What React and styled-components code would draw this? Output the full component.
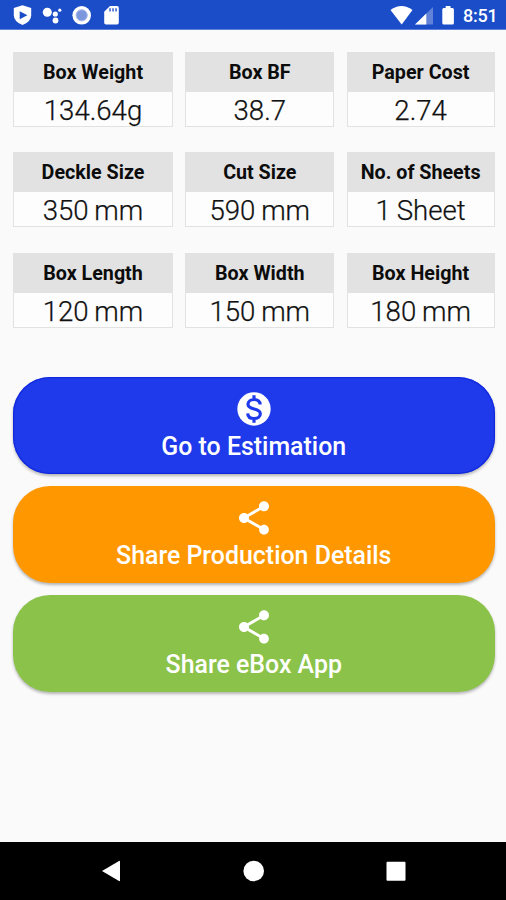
import React from "react";
import styled, { createGlobalStyle } from "styled-components";

const GlobalStyle = createGlobalStyle`
  * { box-sizing: border-box; }
  body { margin: 0; background: #fafafa; font-family: Roboto, sans-serif; }
`;

const Screen = styled.div`
  display: flex;
  flex-direction: column;
  width: 506px;
  height: 900px;
  overflow: hidden;
  background: #fafafa;
`;

const StatusBar = styled.header`
  flex: none;
  display: flex;
  justify-content: space-between;
  height: 30px;
  padding: 0 9px 0 12px;
  background: #1c4dc8;
  border-bottom: 1px solid #5f80d8;
  color: #fff;
`;

const StatusGroup = styled.div`
  display: flex;
  align-items: center;
`;

const StatusIcons = styled.svg`
  display: block;
  height: 30px;
  width: ${(p) => p.$width}px;
`;

const Clock = styled.span`
  width: 34px;
  margin-top: 3px;
  font-size: 18px;
  line-height: 22px;
  font-weight: 500;
  letter-spacing: -0.2px;
  white-space: nowrap;
`;

const Content = styled.main`
  flex: 1;
  padding: 22px 11.5px 0 13px;
`;

const Metrics = styled.section`
  display: grid;
  grid-template-columns: 160px 149px 148px;
  grid-auto-rows: 75px;
  column-gap: 12.3px;
  row-gap: 25.3px;
`;

const Metric = styled.article`
  display: flex;
  flex-direction: column;
  border: 1px solid #e2e2e2;
  background: #fdfdfd;
  text-align: center;
  color: #0c0c0c;
  white-space: nowrap;
`;

const MetricLabel = styled.h2`
  margin: 0;
  height: 39px;
  background: #e2e2e2;
  font-size: 19.7px;
  line-height: 39px;
  font-weight: 700;
`;

const MetricValue = styled.p`
  margin: 0;
  font-size: 27.6px;
  line-height: 37px;
  font-weight: 300;
  word-spacing: -1px;
  -webkit-text-stroke: 0.25px #111;
  color: #111;
`;

const Actions = styled.section`
  display: flex;
  flex-direction: column;
  gap: 12.6px;
  margin-top: 49.5px;
`;

const ActionButton = styled.button`
  display: flex;
  flex-direction: column;
  align-items: center;
  width: 100%;
  height: 96.6px;
  padding: 12px 0 0;
  border: 0;
  border-radius: 37px;
  background: ${(p) => p.$color};
  box-shadow: ${(p) => (p.$edge ? `inset 0 0 1px 1px ${p.$edge}, ` : "")}0 2px 3px rgba(0, 0, 0, 0.28);
  color: #fff;
  font-family: inherit;
  font-size: 24.9px;
  line-height: 30px;
  font-weight: 500;
  white-space: nowrap;
`;

const ActionIcon = styled.svg`
  display: block;
  flex: none;
  width: 40px;
  height: 40px;
  margin-bottom: 3px;
  fill: currentColor;
`;

const NavBar = styled.nav`
  flex: none;
  display: flex;
  justify-content: space-between;
  align-items: center;
  height: 58px;
  padding: 0 100px 0 102px;
  background: #000;
`;

const NavIcon = styled.svg`
  display: block;
  width: 20px;
  height: 22px;
  overflow: visible;
  fill: #fff;
`;

const metrics = [
  ["Box Weight", "134.64g"],
  ["Box BF", "38.7"],
  ["Paper Cost", "2.74"],
  ["Deckle Size", "350 mm"],
  ["Cut Size", "590 mm"],
  ["No. of Sheets", "1 Sheet"],
  ["Box Length", "120 mm"],
  ["Box Width", "150 mm"],
  ["Box Height", "180 mm"],
];

const coinPath =
  "M12 2C6.48 2 2 6.48 2 12s4.480 10 10 10 10-4.480 10-10S17.520 2 12 2z";
const signPath =
  "M15.700 9.300C15.600 7.400 14.200 6.300 12 6.300S8.400 7.500 8.400 9.300C8.400 12.800 15.800 11.200 15.800 14.800 15.800 16.600 14.300 17.700 12 17.700S8.300 16.500 8.200 14.600M12 3.800v2.500M12 17.700v2.500";
const sharePath =
  "M18 16.08c-.76 0-1.44.3-1.96.77L8.91 12.7c.05-.23.09-.46.09-.7s-.04-.47-.09-.7l7.05-4.11c.54.5 1.25.81 2.04.81 1.66 0 3-1.34 3-3s-1.34-3-3-3-3 1.34-3 3c0 .24.04.47.09.7L8.04 9.81C7.5 9.31 6.79 9 6 9c-1.66 0-3 1.34-3 3s1.34 3 3 3c.79 0 1.5-.31 2.04-.81l7.12 4.16c-.05.21-.08.43-.08.65 0 1.61 1.31 2.92 2.92 2.92s2.92-1.31 2.92-2.92-1.31-2.92-2.92-2.92z";

const actions = [
  { label: "Go to Estimation", color: "#1e3aeb", edge: "#0f26dc", icon: coinPath, sign: signPath },
  { label: "Share Production Details", color: "#ff9800", icon: sharePath },
  { label: "Share eBox App", color: "#8bc34a", icon: sharePath },
];

const NotificationIcons = () => (
  <StatusIcons $width={110} viewBox="12 0 110 30" fill="#fff">
    <path d="M22.500 5.300 31.200 8v7.200q0 6.300-8.700 9.800-8.700-3.500-8.700-9.800V8z" />
    <path d="M19.700 11.300v8l7.700-4z" fill="#1c4dc8" />
    <circle cx="47.300" cy="12.200" r="4.500" />
    <circle cx="55.300" cy="14" r="2.600" />
    <circle cx="59.800" cy="10.200" r="1.600" />
    <circle cx="55.500" cy="20.500" r="2.900" />
    <circle cx="81.700" cy="15.300" r="9.300" />
    <circle cx="81.700" cy="15.300" r="5.600" fill="#7d97df" stroke="#a9bbeb" strokeWidth="1" />
    <path d="M110 6h7q1.800 0 1.800 1.800v15q0 1.800-1.800 1.800h-11q-1.800 0-1.800-1.800v-11z" />
    <path d="M109.200 8.300h1.700v3.200h-1.700zM112.200 8.300h1.700v3.200h-1.700zM115.200 8.300h1.700v3.200h-1.700z" fill="#4a70d4" />
  </StatusIcons>
);

const SystemIcons = () => (
  <StatusIcons $width={73} viewBox="390 0 73 30" fill="#fff">
    <path d="M390.500 10q11-8 22 0L401.700 24.500z" />
    <path d="M433 7v17.500h-18z" opacity=".3" />
    <path d="M426.300 13.500v11H415z" />
    <path d="M445.700 6h4.800v2h1.900q1.500 0 1.500 1.500v13.600q0 1.500-1.500 1.500h-8.600q-1.500 0-1.500-1.500V9.500q0-1.500 1.500-1.500h1.900z" />
  </StatusIcons>
);

export default function App() {
  return (
    <Screen>
      <GlobalStyle />
      <StatusBar>
        <StatusGroup><NotificationIcons /></StatusGroup>
        <StatusGroup><SystemIcons /><Clock>8:51</Clock></StatusGroup>
      </StatusBar>
      <Content>
        <Metrics>
          {metrics.map(([label, value]) => (
            <Metric key={label}>
              <MetricLabel>{label}</MetricLabel>
              <MetricValue>{value}</MetricValue>
            </Metric>
          ))}
        </Metrics>
        <Actions>
          {actions.map((a) => (
            <ActionButton key={a.label} $color={a.color} $edge={a.edge}>
              <ActionIcon viewBox="0 0 24 24">
                <path d={a.icon} />
                {a.sign && <path d={a.sign} fill="none" stroke={a.color} strokeWidth="1.9" />}
              </ActionIcon>
              {a.label}
            </ActionButton>
          ))}
        </Actions>
      </Content>
      <NavBar>
        <NavIcon viewBox="0 0 20 22"><path d="M0 11 17 1q1-.5 1 .5v19q0 1-1 .5z" /></NavIcon>
        <NavIcon viewBox="0 0 20 22"><circle cx="9.700" cy="11" r="10.300" /></NavIcon>
        <NavIcon viewBox="0 0 20 22"><rect x="0.500" y="1.800" width="19" height="19" rx="1" /></NavIcon>
      </NavBar>
    </Screen>
  );
}
